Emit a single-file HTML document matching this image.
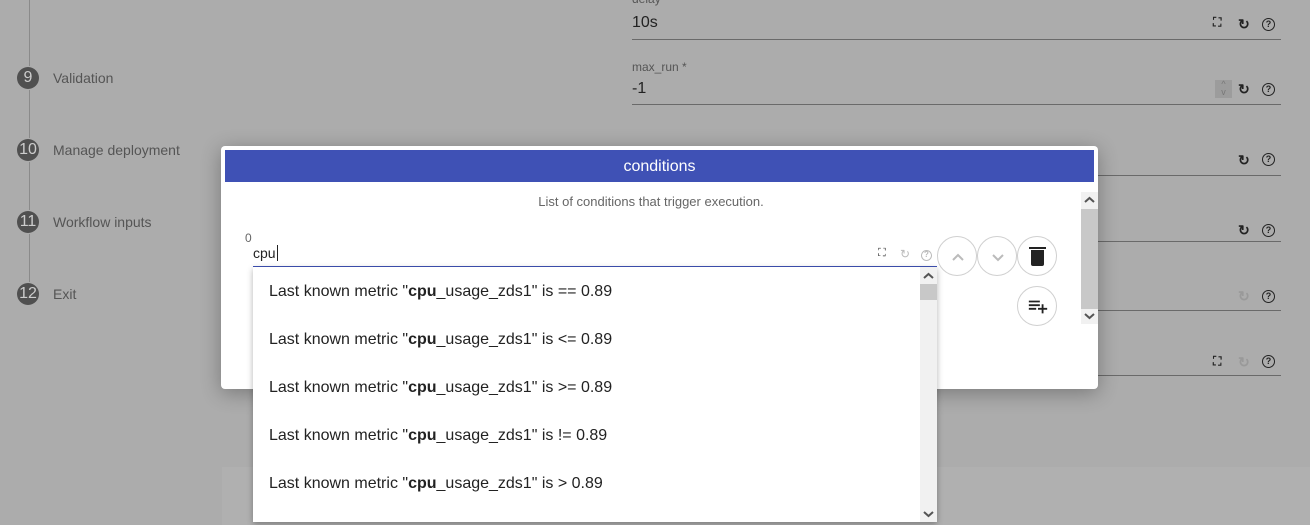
<!DOCTYPE html>
<html><head><style>
*{box-sizing:border-box;margin:0;padding:0}
body{width:1310px;height:525px;overflow:hidden;background:#acacac;font-family:"Liberation Sans",sans-serif;position:relative}
.a{position:absolute}
.step{position:absolute;left:17px;width:22px;height:22px;border-radius:50%;background:#505050;color:#ccc;font-size:16px;text-align:center;line-height:22px}
.sl{position:absolute;left:53px;font-size:14px;color:#555}
.vl{position:absolute;left:29px;width:1px;background:#8a8a8a}
.ln{position:absolute;left:632px;width:649px;height:1px;background:#6a6a6a}
.ic{position:absolute;font-size:14px;color:#222;font-weight:bold}
.q{position:absolute;width:13px;height:13px;border:1.6px solid #222;border-radius:50%;font-size:9px;line-height:10px;text-align:center;font-weight:bold;color:#222}
.item{position:absolute;left:16px;font-size:16px;color:#222}
.circ{position:absolute;width:40px;height:40px;border-radius:50%;border:1px solid #d0d0d0;background:#fff}
</style></head><body>
<div class="vl" style="top:0;height:66px"></div>
<div class="vl" style="top:90px;height:48px"></div>
<div class="vl" style="top:162px;height:48px"></div>
<div class="vl" style="top:234px;height:48px"></div>
<div class="step" style="top:67px">9</div><div class="sl" style="top:70px">Validation</div>
<div class="step" style="top:139px">10</div><div class="sl" style="top:142px">Manage deployment</div>
<div class="step" style="top:211px">11</div><div class="sl" style="top:214px">Workflow inputs</div>
<div class="step" style="top:283px">12</div><div class="sl" style="top:286px">Exit</div>
<div class="a" style="left:222px;top:467px;width:1088px;height:58px;background:#b0b0b0"></div>

<div class="a" style="left:632px;top:-8px;font-size:12px;color:#555">delay *</div>
<div class="a" style="left:632px;top:14px;font-size:16px;color:#222">10s</div>
<div class="ln" style="top:39px"></div>
<div class="a" style="left:632px;top:60px;font-size:12px;color:#555">max_run *</div>
<div class="a" style="left:632px;top:80px;font-size:16px;color:#222">-1</div>
<div class="a" style="left:1215px;top:80px;width:17px;height:18px;background:#9c9c9c;color:#777;font-size:9px;text-align:center;line-height:8px">^<br>v</div>
<div class="ln" style="top:104px"></div>
<div class="ln" style="top:175px"></div>
<div class="ln" style="top:241px"></div>
<div class="ln" style="top:310px"></div>
<div class="ln" style="top:375px"></div>
<div class="ic" style="left:1213px;top:15px;font-size:12px">⛶</div>
<div class="ic" style="left:1238px;top:16px">↻</div><div class="q" style="left:1262px;top:18px">?</div>
<div class="ic" style="left:1238px;top:81px">↻</div><div class="q" style="left:1262px;top:83px">?</div>
<div class="ic" style="left:1238px;top:152px">↻</div><div class="q" style="left:1262px;top:153px">?</div>
<div class="ic" style="left:1238px;top:222px">↻</div><div class="q" style="left:1262px;top:224px">?</div>
<div class="ic" style="left:1238px;top:288px;color:#999">↻</div><div class="q" style="left:1262px;top:290px">?</div>
<div class="ic" style="left:1213px;top:354px;font-size:12px">⛶</div>
<div class="ic" style="left:1238px;top:354px;color:#999">↻</div><div class="q" style="left:1262px;top:355px">?</div>

<div class="a" style="left:221px;top:146px;width:877px;height:243px;background:#fff;border-radius:4px;box-shadow:0 4px 20px rgba(0,0,0,.3)">
 <div class="a" style="left:4px;top:4px;width:869px;height:32px;background:#3f51b5;color:#fff;font-size:16px;text-align:center;line-height:34px">conditions</div>
 <div class="a" style="left:0;top:48px;width:860px;text-align:center;font-size:13px;color:#666">List of conditions that trigger execution.</div>
 <div class="a" style="left:24px;top:85px;font-size:12px;color:#666">0</div>
 <div class="a" style="left:32px;top:99px;font-size:14px;color:#222">cpu<span style="border-left:1px solid #222;margin-left:1px"></span></div>
 <div class="a" style="left:32px;top:120px;width:684px;height:1px;background:#3f51b5"></div>
 <div class="a" style="left:657px;top:101px;font-size:11px;color:#333">⛶</div>
 <div class="a" style="left:679px;top:101px;font-size:12px;color:#bbb">↻</div>
 <div class="q" style="left:700px;top:104px;border-color:#bbb;color:#bbb;width:11px;height:11px;font-size:8px;line-height:8px;border-width:1px">?</div>
 <div class="circ" style="left:716px;top:90px"><svg class="a" style="left:12px;top:14px" width="16" height="12"><path d="M3 9l5-5 5 5" stroke="#bbb" stroke-width="2" fill="none"/></svg></div>
 <div class="circ" style="left:756px;top:90px"><svg class="a" style="left:12px;top:14px" width="16" height="12"><path d="M3 4l5 5 5-5" stroke="#bbb" stroke-width="2" fill="none"/></svg></div>
 <div class="circ" style="left:796px;top:90px"><div class="a" style="left:13px;top:13px;width:13px;height:16px;background:#222;border-radius:0 0 2px 2px"></div><div class="a" style="left:11px;top:10px;width:17px;height:2px;background:#222"></div></div>
 <div class="circ" style="left:796px;top:140px"><svg class="a" style="left:9px;top:9px" width="22" height="22" viewBox="0 0 24 24"><path d="M2 5h12v2H2zm0 4h12v2H2zm0 4h8v2H2zm14 0v-4h2v4h4v2h-4v4h-2v-4h-4v-2z" fill="#222"/></svg></div>
 <div class="a" style="left:860px;top:46px;width:17px;height:132px;background:#f1f1f1">
  <div class="a" style="left:0;top:17px;width:17px;height:100px;background:#c8c8c8"></div>
  <svg class="a" style="left:3px;top:4px" width="11" height="8"><path d="M1 6l4.5-4 4.5 4" stroke="#555" stroke-width="2" fill="none"/></svg>
  <svg class="a" style="left:3px;top:120px" width="11" height="8"><path d="M1 2l4.5 4 4.5-4" stroke="#555" stroke-width="2" fill="none"/></svg>
 </div>
</div>

<div class="a" style="left:253px;top:267px;width:684px;height:255px;background:#fff;box-shadow:0 2px 6px rgba(0,0,0,.3)">
 <div class="item" style="top:16px">Last known metric "<b>cpu</b>_usage_zds1" is == 0.89</div>
 <div class="item" style="top:64px">Last known metric "<b>cpu</b>_usage_zds1" is &lt;= 0.89</div>
 <div class="item" style="top:112px">Last known metric "<b>cpu</b>_usage_zds1" is &gt;= 0.89</div>
 <div class="item" style="top:160px">Last known metric "<b>cpu</b>_usage_zds1" is != 0.89</div>
 <div class="item" style="top:208px">Last known metric "<b>cpu</b>_usage_zds1" is &gt; 0.89</div>
 <div class="a" style="left:667px;top:0;width:17px;height:255px;background:#f1f1f1">
  <div class="a" style="left:0;top:17px;width:17px;height:16px;background:#c8c8c8"></div>
  <svg class="a" style="left:3px;top:5px" width="11" height="8"><path d="M1 6l4.5-4 4.5 4" stroke="#555" stroke-width="2" fill="none"/></svg>
  <svg class="a" style="left:3px;top:243px" width="11" height="8"><path d="M1 2l4.5 4 4.5-4" stroke="#555" stroke-width="2" fill="none"/></svg>
 </div>
</div>
</body></html>
